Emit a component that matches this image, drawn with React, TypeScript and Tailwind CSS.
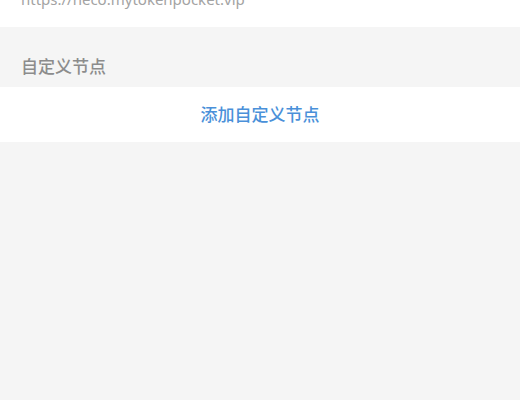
export default function App() {
  return (
    <div
      className="w-[520px] h-[400px] overflow-hidden bg-[#f5f5f5]"
      style={{ fontFamily: '"Noto Sans", "Noto Sans CJK SC", sans-serif' }}
    >
      <div className="h-[27px] bg-white overflow-hidden px-[21px]">
        <p className="mt-[-12px] text-[15px] leading-[22px] text-[#a3a3a3]">
          https://neco.mytokenpocket.vip
        </p>
      </div>
      <div className="h-[60px] flex items-end pb-[8px] px-[21px]">
        <h3 className="text-[17px] leading-[24px] font-medium text-[#8c8c8c]">自定义节点</h3>
      </div>
      <div className="h-[55px] bg-white flex items-center justify-center">
        <button className="text-[17px] leading-[24px] font-medium text-[#4a90d9]">添加自定义节点</button>
      </div>
    </div>
  );
}
